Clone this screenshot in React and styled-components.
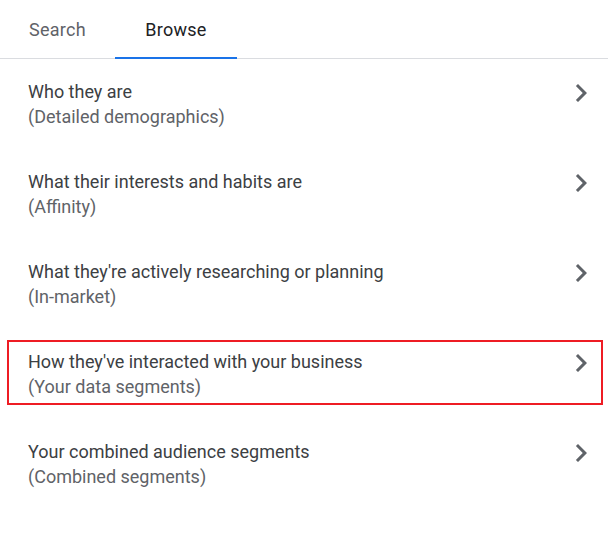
import React from 'react'
import styled, { createGlobalStyle } from 'styled-components'

const Global = createGlobalStyle`
  body {
    margin: 0;
    background: #fff;
    font-family: Roboto, "Liberation Sans", Arial, sans-serif;
  }
`

const Panel = styled.div`
  width: 608px;
  height: 533px;
  background: #fff;
`

const Tabs = styled.div`
  display: flex;
  height: 59px;
  border-bottom: 1px solid #dadce0;
  box-sizing: border-box;
`

const Tab = styled.div`
  display: flex;
  align-items: center;
  justify-content: center;
  width: ${p => p.$w}px;
  font-size: 18px;
  letter-spacing: 0.25px;
  color: ${p => (p.$active ? '#202124' : '#5f6368')};
  border-bottom: 2px solid ${p => (p.$active ? '#1a73e8' : 'transparent')};
  margin-bottom: -1px;
  padding-top: 1px;
  box-sizing: border-box;
`

const List = styled.div`
  display: flex;
  flex-direction: column;
`

const Row = styled.div`
  position: relative;
  display: flex;
  justify-content: space-between;
  align-items: flex-start;
  height: 90px;
  padding: 20px 9px 0 28px;
  box-sizing: border-box;
  cursor: pointer;
`

const Text = styled.div`
  display: flex;
  flex-direction: column;
`

const Title = styled.span`
  font-size: 18px;
  line-height: 25px;
  color: #3c4043;
`

const Sub = styled.span`
  font-size: 18px;
  line-height: 25px;
  color: #5f6368;
`

const Chevron = styled.svg`
  width: 36px;
  height: 36px;
  margin-top: -4px;
  fill: #5f6368;
`

const Highlight = styled.div`
  position: absolute;
  left: 7px;
  right: 5px;
  top: 11px;
  bottom: 14px;
  border: 2px solid #ee1c24;
  pointer-events: none;
`

const items = [
  ['Who they are', '(Detailed demographics)'],
  ['What their interests and habits are', '(Affinity)'],
  ["What they're actively researching or planning", '(In-market)'],
  ["How they've interacted with your business", '(Your data segments)', true],
  ['Your combined audience segments', '(Combined segments)'],
]

const App = () => {
  return (
    <Panel>
      <Global />
      <Tabs>
        <Tab $w={115}>Search</Tab>
        <Tab $w={122} $active>Browse</Tab>
      </Tabs>
      <List>
        {items.map(([title, sub, marked]) => (
          <Row key={title}>
            <Text>
              <Title>{title}</Title>
              <Sub>{sub}</Sub>
            </Text>
            <Chevron viewBox="0 0 24 24">
              <path d="M10 6L8.59 7.41 13.17 12l-4.58 4.59L10 18l6-6z" />
            </Chevron>
            {marked && <Highlight />}
          </Row>
        ))}
      </List>
    </Panel>
  )
}

export default App
